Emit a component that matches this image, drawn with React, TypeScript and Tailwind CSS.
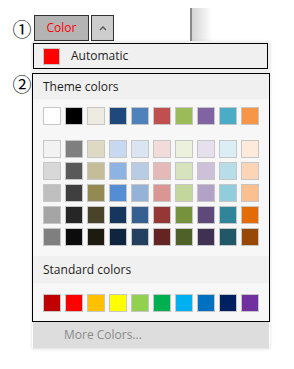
const theme = ["#ffffff", "#000000", "#eeece1", "#1f497d", "#4f81bd", "#c0504d", "#9bbb59", "#8064a2", "#4bacc6", "#f79646"];

const tints = [
  ["#f2f2f2", "#7f7f7f", "#ddd9c3", "#c6d9f0", "#dbe5f1", "#f2dcdb", "#ebf1dd", "#e5e0ec", "#dbeef3", "#fdeada"],
  ["#d8d8d8", "#595959", "#c4bd97", "#8db3e2", "#b8cce4", "#e5b9b7", "#d7e3bc", "#ccc1d9", "#b7dde8", "#fbd5b5"],
  ["#bfbfbf", "#3f3f3f", "#938953", "#548dd4", "#95b3d7", "#d99694", "#c3d69b", "#b2a2c7", "#92cddc", "#fac08f"],
  ["#a5a5a5", "#262626", "#494429", "#17365d", "#366092", "#953734", "#76923c", "#5f497a", "#31859b", "#e36c09"],
  ["#7f7f7f", "#0c0c0c", "#1d1b10", "#0f243e", "#244061", "#632423", "#4f6128", "#3f3151", "#205867", "#974806"],
];

const standard = ["#c00000", "#ff0000", "#ffc000", "#ffff00", "#92d050", "#00b050", "#00b0f0", "#0070c0", "#002060", "#7030a0"];

function SwatchRow({ colors }: { colors: string[] }) {
  return (
    <div className="flex gap-[4px]">
      {colors.map((c, i) => (
        <div key={i} className="w-[18px] h-[18px] border border-[#c6c6c6]" style={{ backgroundColor: c }} />
      ))}
    </div>
  );
}

export default function App() {
  return (
    <div className="relative w-[294px] h-[369px] bg-white text-[12px] text-[#1e1e1e] font-['Open_Sans','Noto_Sans',sans-serif]">
      <div className="flex items-end pt-[8px] pl-[12px]">
        <span className="w-[20px] h-[26px] mr-[2px] flex items-center justify-center text-[19px] leading-none text-black font-['Noto_Sans_CJK_JP',sans-serif]">
          ①
        </span>
        <div className="w-[55px] h-[26px] bg-[#b4b4b4] border border-[#333] flex items-center justify-center text-[#ff0000]">
          Color
        </div>
        <div className="w-[23px] h-[26px] ml-[2px] bg-[#cdcdcd] border border-[#333] flex items-center justify-center">
          <svg width="8" height="5" viewBox="0 0 8 5">
            <path d="M1 4 L4 1 L7 4" fill="none" stroke="#555" strokeWidth="1.3" />
          </svg>
        </div>
        <div className="w-[22px] h-[33px] ml-[76px] border-l-2 border-[#8a8a8a] bg-gradient-to-r from-[#d4d4d4] to-white" />
      </div>

      <div className="relative ml-[32px] w-[238px] shadow-[0_1px_3px_rgba(0,0,0,0.15)]">
        <div className="bg-[#f0f0f0] pt-[2px] pl-[1px] pr-[2px] pb-[4px]">
          <div className="h-[26px] border border-black flex items-center pl-[9px]">
            <div className="w-[17px] h-[17px] bg-[#ff0000] border border-[#c6c6c6]" />
            <span className="ml-[11px]">Automatic</span>
          </div>
        </div>

        <div className="border border-black bg-[#f7f7f7]">
          <div className="h-[25px] bg-[#f0f0f0] flex items-center pl-[10px]">Theme colors</div>
          <div className="pt-[8px] pb-[10px] pl-[10px]">
            <SwatchRow colors={theme} />
            <div className="mt-[15px] flex flex-col gap-[4px]">
              {tints.map((row, i) => (
                <SwatchRow key={i} colors={row} />
              ))}
            </div>
          </div>
          <div className="h-[27px] bg-[#f0f0f0] flex items-center pl-[10px]">Standard colors</div>
          <div className="pt-[11px] pb-[9px] pl-[10px]">
            <SwatchRow colors={standard} />
          </div>
        </div>

        <div className="mx-[1px] h-[26px] bg-[#dddddd] flex items-center pl-[31px] text-[#8a8a8a]">More Colors...</div>

        <span className="absolute left-[-20px] top-[32px] w-[20px] h-[20px] flex items-center justify-center text-[19px] leading-none text-black font-['Noto_Sans_CJK_JP',sans-serif]">
          ②
        </span>
      </div>
    </div>
  );
}
